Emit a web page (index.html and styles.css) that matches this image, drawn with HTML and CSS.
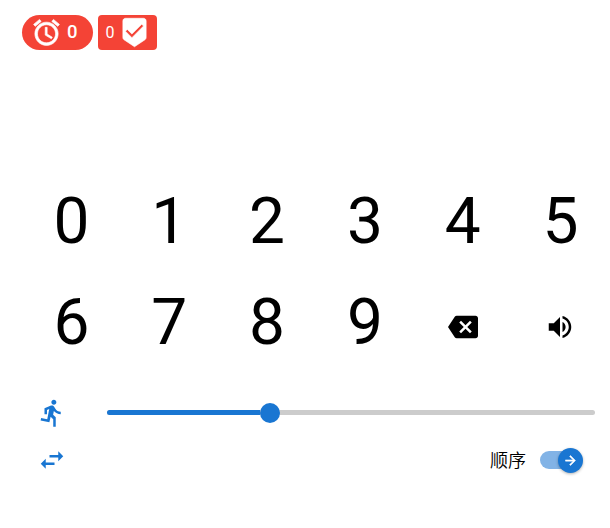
FILE: index.html
```
<!DOCTYPE html>
<html lang="zh-CN">
<head>
<meta charset="utf-8">
<title>数字</title>
<link rel="stylesheet" href="styles.css">
</head>
<body>
<header class="scores">
  <div class="badge pill"><svg viewBox="0 0 24 24"><path d="M22 5.72l-4.6-3.86-1.29 1.53 4.6 3.86L22 5.72zM7.88 3.39L6.6 1.86 2 5.71l1.29 1.53 4.59-3.85zM12.5 8H11v6l4.75 2.85.75-1.23-4-2.37V8zM12 4c-4.97 0-9 4.03-9 9s4.02 9 9 9c4.97 0 9-4.03 9-9s-4.03-9-9-9zm0 16c-3.87 0-7-3.13-7-7s3.13-7 7-7 7 3.13 7 7-3.13 7-7 7z"/></svg><span>0</span></div>
  <div class="badge tag"><span>0</span><svg viewBox="0 0 24 24"><path d="M19 1H5c-1.1 0-1.99.9-1.99 2L3 15.93c0 .69.35 1.3.88 1.66L12 23l8.11-5.41c.53-.36.88-.97.88-1.66L21 3c0-1.1-.9-2-2-2zm-9 15l-5-5 1.41-1.41L10 13.17l7.59-7.59L19 7l-9 9z"/></svg></div>
</header>
<main class="keypad">
  <div class="key">0</div><div class="key">1</div><div class="key">2</div><div class="key">3</div><div class="key">4</div><div class="key">5</div>
  <div class="key">6</div><div class="key">7</div><div class="key">8</div><div class="key">9</div>
  <div class="key icon-key"><svg viewBox="0 0 24 24"><path d="M22 3H7c-.69 0-1.23.35-1.59.88L0 12l5.41 8.11c.36.53.9.89 1.59.89h15c1.1 0 2-.9 2-2V5c0-1.1-.9-2-2-2zm-3 12.59L17.59 17 14 13.41 10.41 17 9 15.59 12.59 12 9 8.41 10.41 7 14 10.59 17.59 7 19 8.41 15.41 12 19 15.59z"/></svg></div>
  <div class="key icon-key"><svg viewBox="0 0 24 24"><path d="M3 9v6h4l5 5V4L7 9H3zm13.5 3c0-1.77-1.02-3.29-2.5-4.03v8.05c1.48-.73 2.5-2.25 2.5-4.02zM14 3.23v2.06c2.89.86 5 3.54 5 6.71s-2.11 5.85-5 6.71v2.06c4.01-.91 7-4.49 7-8.77s-2.99-7.86-7-8.77z"/></svg></div>
</main>
<section class="row">
  <svg class="lead" viewBox="0 0 24 24"><path d="M13.49 5.48c1.1 0 2-.9 2-2s-.9-2-2-2-2 .9-2 2 .9 2 2 2zm-3.6 13.9l1-4.4 2.1 2v6h2v-7.5l-2.1-2 .6-3c1.3 1.5 3.3 2.5 5.5 2.5v-2c-1.9 0-3.5-1-4.3-2.4l-1-1.6c-.4-.6-1-1-1.7-1-.3 0-.5.1-.8.1l-5.2 2.2v4.7h2v-3.4l1.8-.7-1.6 8.1-4.9-1-.4 2 7 1.4z"/></svg>
  <div class="slider"><div class="fill"></div><div class="thumb"></div></div>
</section>
<section class="row order">
  <svg class="lead" viewBox="0 0 24 24"><path d="M6.99 11L3 15l3.99 4v-3H14v-2H6.99v-3zM21 9l-3.99-4v3H10v2h7.01v3L21 9z"/></svg>
  <span class="label">顺序</span>
  <div class="toggle"><div class="knob"><svg viewBox="0 0 24 24"><path d="M12 4l-1.41 1.41L16.17 11H4v2h12.17l-5.58 5.59L12 20l8-8z"/></svg></div></div>
</section>
</body>
</html>
```
FILE: styles.css
```
* { box-sizing: border-box; }
body {
  margin: 0;
  height: 528px;
  overflow: hidden;
  background: #fff;
  color: #000;
  font-family: Roboto, "Noto Sans CJK SC", sans-serif;
}
svg { display: block; flex: none; fill: currentColor; }
.scores { display: flex; gap: 5px; padding: 15px 0 0 22px; }
.badge {
  display: flex;
  align-items: center;
  height: 35px;
  background: #f44336;
  color: #fff;
}
.badge svg { width: 31px; height: 31px; stroke: currentColor; stroke-width: .5; }
.pill { width: 71px; padding-left: 9px; border-radius: 18px; font-size: 18.5px; gap: 5px; font-weight: 500; }
.pill span { margin-top: -1px; }
.tag { width: 59px; padding-left: 7.5px; border-radius: 4px; font-size: 16px; gap: 4px; font-weight: 400; }
.tag span { margin-top: -1px; }
.keypad {
  display: grid;
  grid-template-columns: repeat(6, 97.8px);
  grid-auto-rows: 101px;
  margin: 121px 0 0 22.6px;
}
.key {
  display: flex;
  align-items: center;
  justify-content: center;
  font-size: 64px;
  line-height: 1;
}
.icon-key svg { width: 30px; height: 30px; margin-top: 8px; }
.row {
  display: flex;
  align-items: center;
  height: 47px;
  margin-top: 16px;
  padding-left: 37px;
  color: #1976d2;
}
.lead { width: 30px; height: 30px; }
.slider {
  display: flex;
  align-items: center;
  width: 488px;
  height: 5px;
  margin-left: 40px;
  border-radius: 3px;
  background: #ccc;
}
.fill { width: 153px; height: 5px; border-radius: 3px 0 0 3px; background: #1976d2; }
.thumb { width: 20px; height: 20px; flex: none; border-radius: 50%; background: #1976d2; }
.order { margin-top: 0; }
.label { margin: -2px 0 0 auto; font-size: 18px; color: #000; font-weight: 350; }
.toggle {
  display: flex;
  align-items: center;
  justify-content: flex-end;
  width: 43px;
  height: 18px;
  margin: 1px 27px 0 14px;
  border-radius: 9px;
  background: linear-gradient(#82b3e6, #82b3e6) 0 0 / 30px 100% no-repeat;
}
.knob {
  display: flex;
  align-items: center;
  justify-content: center;
  width: 25px;
  height: 25px;
  border-radius: 50%;
  background: #1976d2;
  color: #fff;
  box-shadow: 0 1px 3px rgba(0, 0, 0, .3);
}
.knob svg { width: 15px; height: 15px; stroke: currentColor; stroke-width: .8; }
```
